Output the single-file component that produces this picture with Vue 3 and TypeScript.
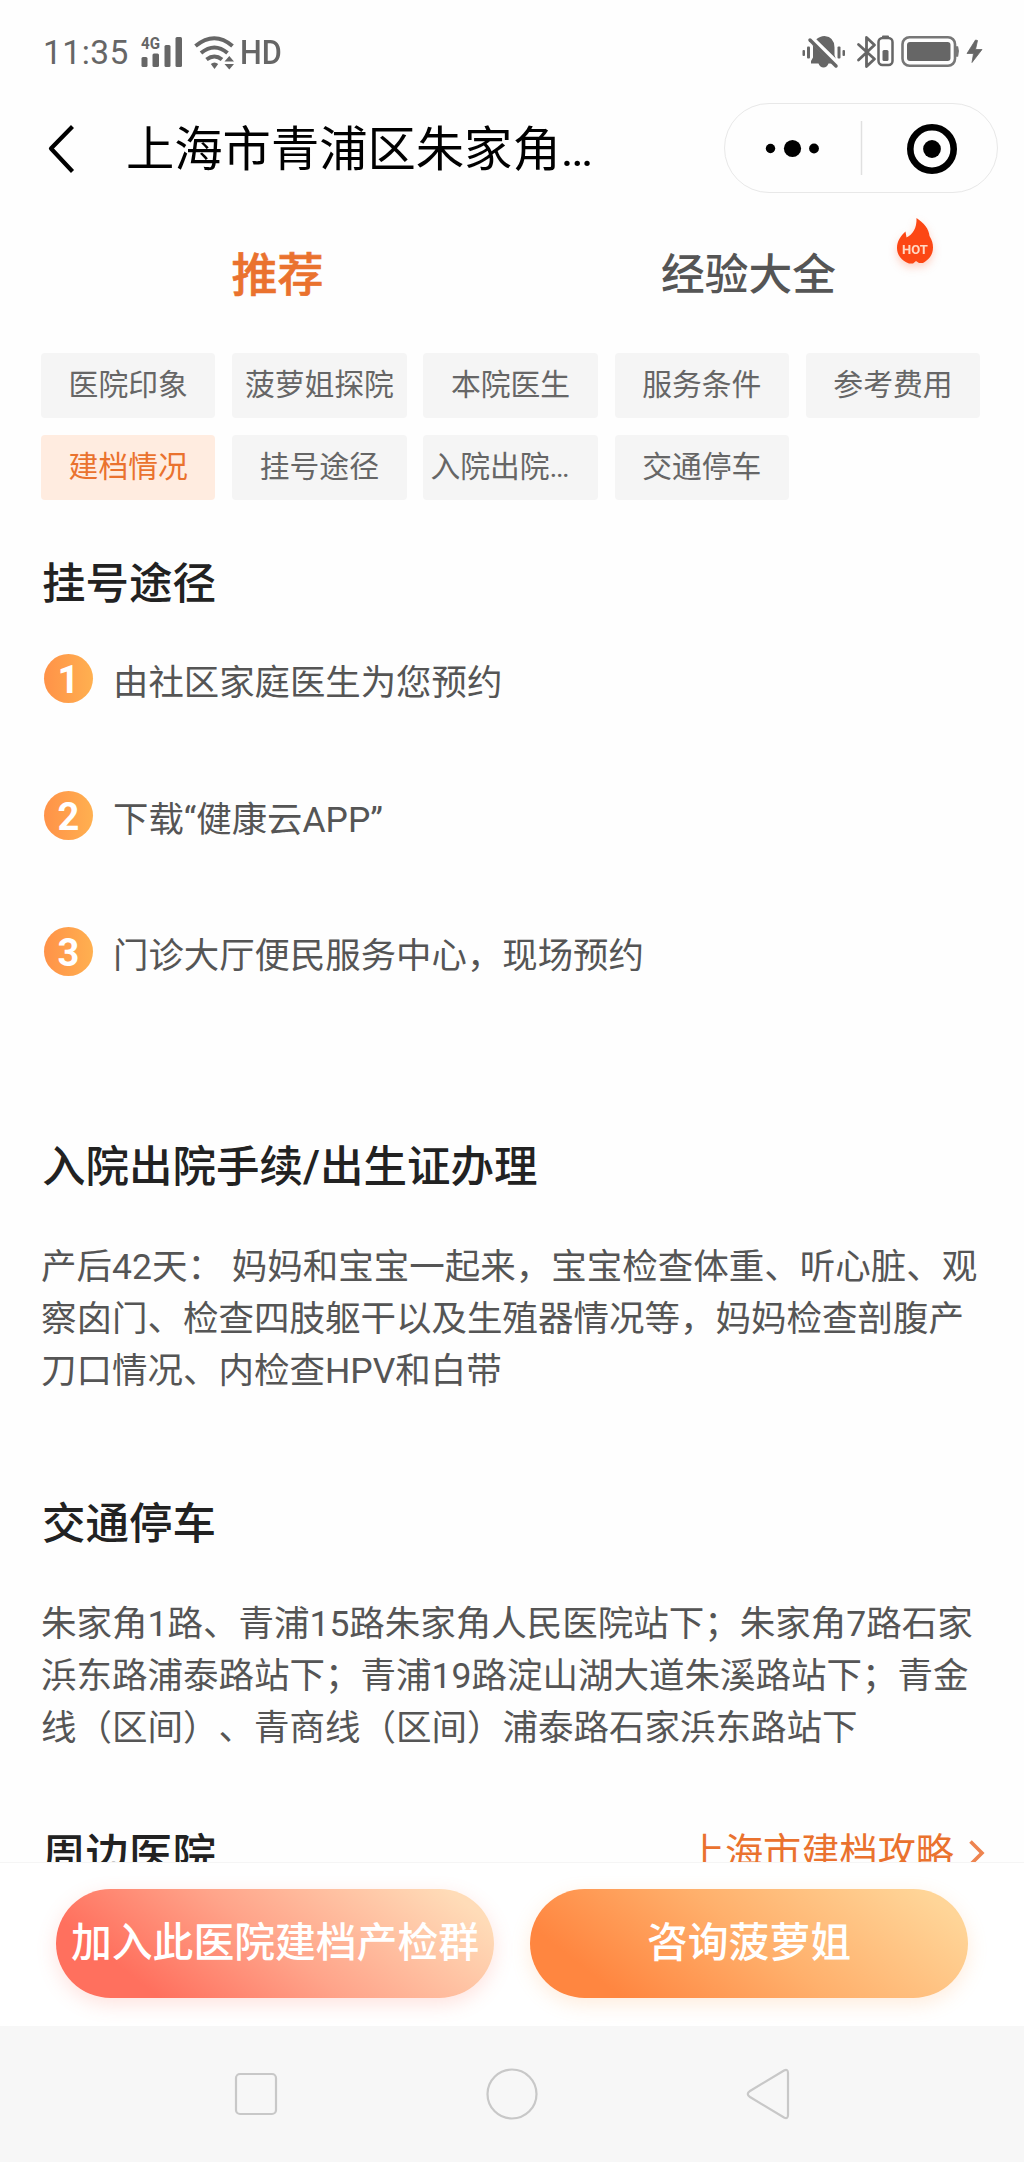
<script setup lang="ts">
interface Tag {
  label: string
  active?: boolean
  clipped?: boolean
}

const tags: Tag[] = [
  { label: '医院印象' },
  { label: '菠萝姐探院' },
  { label: '本院医生' },
  { label: '服务条件' },
  { label: '参考费用' },
  { label: '建档情况', active: true },
  { label: '挂号途径' },
  { label: '入院出院…', clipped: true },
  { label: '交通停车' },
]

const steps: string[] = [
  '由社区家庭医生为您预约',
  '下载“健康云APP”',
  '门诊大厅便民服务中心，现场预约',
]

const discharge: string[] = [
  '产后42天： 妈妈和宝宝一起来，宝宝检查体重、听心脏、观',
  '察囟门、检查四肢躯干以及生殖器情况等，妈妈检查剖腹产',
  '刀口情况、内检查HPV和白带',
]

const traffic: string[] = [
  '朱家角1路、青浦15路朱家角人民医院站下；朱家角7路石家',
  '浜东路浦泰路站下；青浦19路淀山湖大道朱溪路站下；青金',
  '线（区间）、青商线（区间）浦泰路石家浜东路站下',
]
</script>

<template>
  <div class="screen">
    <div class="status">
      <div class="status-left">
        <span class="time">11:35</span>
        <svg class="signal" width="42" height="32" viewBox="0 0 42 32" fill="#666">
          <text x="0" y="13" class="net" textLength="19" lengthAdjust="spacingAndGlyphs">4G</text>
          <rect x="0.5" y="21" width="6" height="10" rx="1.5" />
          <rect x="11.5" y="17.5" width="6.5" height="13.5" rx="1.5" />
          <rect x="23.5" y="9" width="6" height="22" rx="1.5" />
          <rect x="34.5" y="1" width="6.5" height="30" rx="1.5" />
        </svg>
        <svg class="wifi" width="42" height="34" viewBox="0 0 42 34" fill="none" stroke="#666" stroke-width="4">
          <path d="M1.5 10Q20.500-5.500 38.500 10" />
          <path d="M7 17Q20.500 6 33.500 17" />
          <path d="M12.500 23.500Q20.500 17.500 28 23.500" />
          <path d="M16.800 28Q20.500 25 24.200 28L20.500 33Z" fill="#666" stroke="none" />
          <path d="M30.500 25.500L35.300 20L40 25.500ZM30.500 28L35.300 33.500L40 28Z" fill="#666" stroke="none" />
        </svg>
        <span class="hd">HD</span>
      </div>
      <svg class="status-right" width="182" height="34" viewBox="0 0 182 34" fill="#666">
        <rect x="0.500" y="15" width="2.500" height="6" rx="1" />
        <rect x="5" y="11.500" width="3" height="12" rx="1" />
        <rect x="35.500" y="11.500" width="3" height="12" rx="1" />
        <rect x="40.500" y="15" width="2.500" height="6" rx="1" />
        <path d="M14 4.500Q18 1 22.500 1Q32.500 2 32.500 12.500V20L34 24.500L14 4.500Z" />
        <path d="M10.500 9.500L30 28.500H26.500Q25 32.500 21.500 32.500Q18 32.500 16.500 28.500H9V26L11 22.500V11Z" />
        <path d="M8 5L34 31" stroke="#666" stroke-width="3.500" stroke-linecap="round" />
        <path d="M12 3.500L37 28" stroke="#fefefe" stroke-width="2" />
        <path d="M56.500 9.500L72.500 24L64.500 31.500V2.500L72.500 10L56.500 25" fill="none" stroke="#666" stroke-width="2.800" stroke-linejoin="round" stroke-linecap="round" />
        <rect x="76.500" y="3" width="14" height="27" rx="4" fill="none" stroke="#666" stroke-width="2.500" />
        <rect x="80" y="0.500" width="7" height="2.500" rx="1" />
        <rect x="80.500" y="15" width="6" height="11" rx="1.500" />
        <rect x="100.500" y="2.200" width="52.500" height="28.600" rx="7" fill="none" stroke="#777" stroke-width="2.600" />
        <rect x="105" y="7" width="43.500" height="19" rx="3" />
        <path d="M154.500 12H155.500Q157 16 155.500 21H154.500Z" stroke="#777" stroke-width="1.500" />
        <path d="M173.500 5L165 18.500H171.500L170 27.500L180 14.500H173.500L175.500 5.500Z" stroke="#666" stroke-width="0.800" />
      </svg>
    </div>

    <header class="header">
      <svg class="back" width="28" height="50" viewBox="0 0 28 50" fill="none" stroke="#000" stroke-width="4.200" stroke-linejoin="round">
        <path d="M25.500 2.500L4 24.500L25.500 47.500" />
      </svg>
      <h1>上海市青浦区朱家角…</h1>
      <div class="capsule">
        <svg width="272" height="88" viewBox="0 0 272 88">
          <circle cx="45.500" cy="44.500" r="4.700" />
          <circle cx="67.500" cy="44.500" r="8.600" />
          <circle cx="89" cy="44.500" r="4.900" />
          <path d="M136.500 17V71" stroke="#e0e0e0" stroke-width="1.500" />
          <circle cx="207" cy="45" r="21.700" fill="none" stroke="#000" stroke-width="6.600" />
          <circle cx="207" cy="45" r="8.900" />
        </svg>
      </div>
    </header>

    <nav class="tabs">
      <div class="tab on">推荐</div>
      <div class="tab">
        经验大全
        <svg class="hot" width="46" height="60" viewBox="0 0 46 60">
          <path d="M24.500 1C32 6 37 12 37.500 19C40 23 41 26.500 41 30.500C41 38 36.500 43 31 46H27L24 44L21 46.500H17C9 43.500 5 37.500 5 31C5 24.500 8.500 19 13.500 14.500L14.500 20.500C20.500 18 25 11 24.500 1Z" fill="#fc4714" />
          <text x="23" y="36.500" text-anchor="middle">HOT</text>
        </svg>
      </div>
    </nav>

    <main class="content">
      <div class="tags">
        <div v-for="t in tags" :key="t.label" class="tag" :class="{ active: t.active, clipped: t.clipped }">{{ t.label }}</div>
      </div>

      <h2 class="first">挂号途径</h2>
      <ol class="steps">
        <li v-for="(s, i) in steps" :key="s">
          <span class="num">{{ i + 1 }}</span>
          <span class="step-text">{{ s }}</span>
        </li>
      </ol>

      <h2 class="second">入院出院手续/出生证办理</h2>
      <div class="para">
        <div v-for="l in discharge" :key="l">{{ l }}</div>
      </div>

      <h2 class="third">交通停车</h2>
      <div class="para">
        <div v-for="l in traffic" :key="l">{{ l }}</div>
      </div>

      <div class="nearby">
        <h2>周边医院</h2>
        <a>
          上海市建档攻略
          <svg width="16" height="28" viewBox="0 0 16 28" fill="none" stroke="#ee8450" stroke-width="3.600">
            <path d="M1.500 2.500L13 14L1.500 25.500" />
          </svg>
        </a>
      </div>
    </main>

    <footer class="actions">
      <button class="join">加入此医院建档产检群</button>
      <button class="ask">咨询菠萝姐</button>
    </footer>

    <div class="sysnav">
      <svg width="52" height="52" viewBox="0 0 52 52"><rect x="6" y="6" width="40" height="40" rx="4" /></svg>
      <svg width="52" height="52" viewBox="0 0 52 52"><circle cx="26" cy="26" r="24.500" /></svg>
      <svg width="52" height="52" viewBox="0 0 52 52"><path d="M42 2.500Q46 0.500 46 5V47Q46 51.500 42 49.500L8 29Q3.500 26 8 23Z" /></svg>
    </div>
  </div>
</template>

<style>
body {
  margin: 0;
  background: #fefefe;
}
</style>

<style scoped>
.screen {
  width: 1024px;
  height: 2162px;
  display: flex;
  flex-direction: column;
  overflow: hidden;
  background: #fefefe;
  font-family: Roboto, "Noto Sans CJK SC", sans-serif;
  text-spacing-trim: space-all;
  color: #555;
}
.status {
  height: 103px;
  flex: none;
  display: flex;
  justify-content: space-between;
  align-items: flex-start;
  box-sizing: border-box;
  padding: 35px 40px 0 43px;
  color: #666;
}
.status-left {
  display: flex;
  align-items: flex-start;
}
.time,
.hd {
  font-size: 33px;
  line-height: 36px;
}
.time {
  width: 98px;
  font-size: 33.5px;
  letter-spacing: 0.5px;
}
.net {
  font-size: 16.5px;
  font-weight: 700;
}
.signal {
  margin-top: 1px;
  overflow: visible;
}
.wifi {
  margin: 1px 0 0 11px;
}
.hd {
  margin-left: 4px;
  font-weight: 500;
  transform: scaleX(0.93);
  transform-origin: left;
}
.header {
  height: 90px;
  flex: none;
  display: flex;
  align-items: center;
  padding: 0 26px 0 47px;
}
.back {
  margin-top: 2px;
}
h1 {
  flex: 1;
  margin: 0 0 0 51px;
  font-size: 48.3px;
  font-weight: 400;
  line-height: 90px;
  padding-top: 4px;
  color: #000;
  white-space: nowrap;
}
.capsule {
  width: 272px;
  height: 88px;
  border: 1.5px solid #e8e8e8;
  border-radius: 45px;
}
.capsule svg {
  display: block;
}
.tabs {
  height: 160px;
  flex: none;
  display: flex;
  padding: 0 40px 0 42px;
}
.tab {
  flex: 1;
  position: relative;
  text-align: center;
  font-size: 43.7px;
  font-weight: 500;
  line-height: 164px;
}
.tab.on {
  font-size: 46px;
  color: #ea722e;
  -webkit-text-stroke: 0.6px #ea722e;
}
.hot {
  position: absolute;
  left: 379px;
  top: 24px;
  filter: drop-shadow(0 4px 4px rgba(252, 71, 20, 0.25));
}
.hot text {
  font-size: 13px;
  font-weight: 700;
  fill: #ffd9c4;
}
.content {
  height: 1509px;
  flex: none;
  overflow: hidden;
  padding: 0 41px;
  box-sizing: border-box;
}
.tags {
  display: grid;
  grid-template-columns: repeat(5, 174.4px);
  grid-auto-rows: 65px;
  gap: 16.8px;
}
.tag {
  box-sizing: border-box;
  border-radius: 4px;
  background: #f5f5f5;
  color: #666;
  font-size: 29.8px;
  line-height: 64px;
  text-align: center;
  white-space: nowrap;
}
.tag.active {
  background: #ffece0;
  color: #ea722e;
}
.tag.clipped {
  text-align: left;
  padding-left: 7px;
}
h2 {
  margin: 0;
  padding-left: 1px;
  font-size: 43.5px;
  font-weight: 500;
  line-height: 60px;
  color: #222;
  white-space: nowrap;
}
h2.first {
  margin-top: 55.2px;
}
h2.second {
  margin-top: 74.5px;
}
h2.third {
  margin-top: 97.5px;
}
.steps {
  list-style: none;
  margin: 39.3px 0 0;
  padding: 0;
}
.steps li {
  height: 136.5px;
  display: flex;
  align-items: flex-start;
  padding-left: 3px;
}
.num {
  width: 49px;
  height: 49px;
  border-radius: 50%;
  background: linear-gradient(90deg, #ff9248, #ffb050);
  color: #fff;
  font-size: 38px;
  font-weight: 700;
  line-height: 52px;
  text-align: center;
}
.step-text {
  margin-left: 20px;
  font-size: 35.4px;
  line-height: 58px;
}
.para {
  margin-top: 42.7px;
  font-size: 35.5px;
  line-height: 52.2px;
  white-space: nowrap;
}
.nearby {
  margin-top: 71.5px;
  display: flex;
  justify-content: space-between;
}
.nearby a {
  display: flex;
  align-items: center;
  font-size: 38.2px;
  line-height: 54px;
  height: 54px;
  color: #ea722e;
}
.nearby a svg {
  margin: 0 -2px 0 15px;
}
.actions {
  height: 164px;
  flex: none;
  display: flex;
  justify-content: center;
  gap: 36.5px;
  box-sizing: border-box;
  padding: 26px 0 0;
  border-top: 1px solid #f5f5f5;
  background: #fff;
}
button {
  width: 437.5px;
  height: 109px;
  border: 0;
  padding: 0 0 8px;
  border-radius: 55px;
  font-family: inherit;
  font-size: 40.8px;
  font-weight: 500;
  color: #fff;
  white-space: nowrap;
}
.join {
  background: linear-gradient(38deg, #ff705e 18%, #ffa48a 50%, #ffdcb8 92%);
  box-shadow: 0 6px 20px rgba(255, 108, 92, 0.2);
}
.ask {
  background: linear-gradient(38deg, #ff8640 16%, #ffb06c 52%, #ffd598 92%);
  box-shadow: 0 6px 20px rgba(255, 160, 80, 0.2);
}
.sysnav {
  height: 136px;
  flex: none;
  display: flex;
  justify-content: center;
  align-items: center;
  gap: 204px;
  background: #f7f7f7;
}
.sysnav svg {
  fill: none;
  stroke: #c8c8c8;
  stroke-width: 2.2;
}
</style>
